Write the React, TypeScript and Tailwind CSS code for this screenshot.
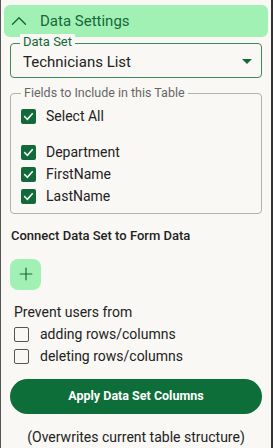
import { ChevronUp, Plus } from "lucide-react";

const fields = ["Department", "FirstName", "LastName"];

const CheckedBox = () => (
  <span className="flex h-[15px] w-[15px] items-center justify-center rounded-[2px] bg-[#12693a]">
    <svg width="11" height="11" viewBox="0 0 12 12" fill="none">
      <path d="M2 6.2 L4.8 9 L10 3.2" stroke="white" strokeWidth="1.7" strokeLinecap="square" />
    </svg>
  </span>
);

const EmptyBox = () => (
  <span className="h-[15px] w-[15px] rounded-[2px] border-[1.5px] border-[#555]" />
);

export default function App() {
  return (
    <div
      className="h-[448px] w-[273px] overflow-hidden border-l border-r-2 border-l-[#555] border-r-[#333] bg-[#faf8f4] text-[#222]"
      style={{ fontFamily: "Roboto, 'Liberation Sans', sans-serif" }}
    >
      <div className="flex flex-col px-[3px] pt-[5px]">
        {/* header */}
        <div className="flex h-[32px] items-center rounded-[6px] bg-[#a2f1b4] pl-[2px] text-[#14683a]">
          <ChevronUp size={26} strokeWidth={1.3} />
          <span className="ml-[8px] text-[15px]">Data Settings</span>
        </div>

        <div className="flex flex-col px-[6px]">
          {/* data set select */}
          <div className="relative mt-[6px] flex h-[35px] items-center justify-between rounded-[4px] border-[1.5px] border-[#3f8a5c] pl-[12px] pr-[9px]">
            <span className="absolute left-[9px] top-[-10px] bg-[#faf8f4] px-[3px] text-[13px] leading-[15px] text-[#14683a]">
              Data Set
            </span>
            <span className="pt-[3px] text-[15px] text-[#222]">Technicians List</span>
            <svg width="10" height="6" viewBox="0 0 10 6" className="mt-[2px]">
              <path d="M0 0 L10 0 L5 5 Z" fill="#14683a" />
            </svg>
          </div>

          {/* fields fieldset */}
          <div className="relative mt-[15px] flex h-[121px] flex-col rounded-[4px] border border-[#b3b1ad] pl-[10px] pt-[15px]">
            <span className="absolute left-[10px] top-[-8px] bg-[#faf8f4] px-[3px] text-[12.5px] leading-[14px] text-[#666]">
              Fields to Include in this Table
            </span>
            <div className="flex h-[15px] items-center gap-[10px] text-[14px]">
              <CheckedBox />
              <span>Select All</span>
            </div>
            <div className="mt-[21px] flex flex-col gap-[7px]">
              {fields.map((f) => (
                <div key={f} className="flex h-[15px] items-center gap-[10px] text-[14px]">
                  <CheckedBox />
                  <span>{f}</span>
                </div>
              ))}
            </div>
          </div>

          <div className="mt-[12px] pl-[1px] text-[13px] font-medium text-[#222]">
            Connect Data Set to Form Data
          </div>

          <button className="mt-[13px] flex h-[31px] w-[31px] items-center justify-center rounded-[8px] bg-[#a2f1b4] text-[#14683a]">
            <Plus size={20} strokeWidth={1.4} />
          </button>

          <div className="mt-[12px] pl-[4px] text-[14px]">Prevent users from</div>
          <div className="mt-[4px] flex flex-col gap-[7px] pl-[4px]">
            <div className="flex h-[15px] items-center gap-[11px] text-[14px]">
              <EmptyBox />
              <span>adding rows/columns</span>
            </div>
            <div className="flex h-[15px] items-center gap-[11px] text-[14px]">
              <EmptyBox />
              <span>deleting rows/columns</span>
            </div>
          </div>

          <button className="mt-[15px] flex h-[35px] items-center justify-center rounded-full bg-[#0d6e3a] text-[12.5px] font-bold text-white">
            Apply Data Set Columns
          </button>

          <div className="mt-[13px] text-center text-[14px]">(Overwrites current table structure)</div>
        </div>
      </div>
    </div>
  );
}
